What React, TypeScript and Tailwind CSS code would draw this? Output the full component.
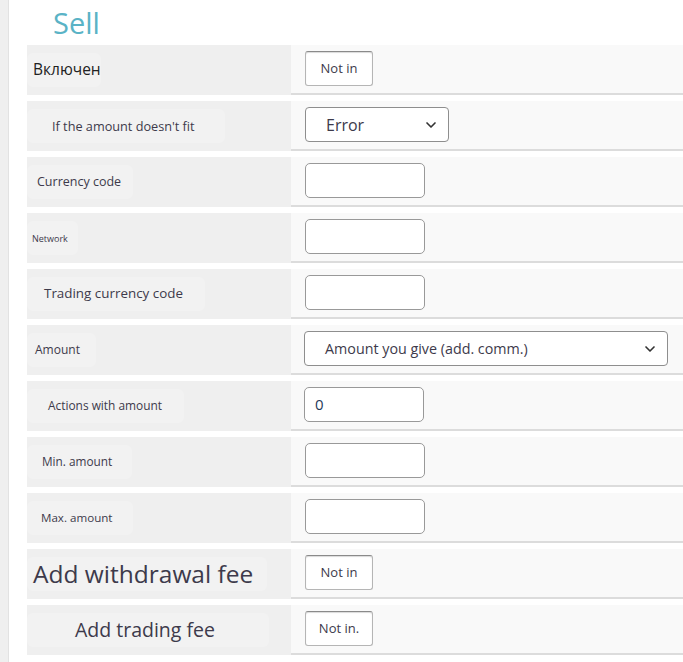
import { ChevronDown } from "lucide-react";

type Row = {
  label: string;
  labelClass: string;
  control: "toggle" | "select" | "input" | "wide";
  value?: string;
};

const rows: Row[] = [
  { label: "Включен", labelClass: "pl-[6px] text-[15.5px] font-medium text-[#222]", control: "toggle", value: "Not in" },
  { label: "If the amount doesn't fit", labelClass: "pl-[25px] pr-[30px] text-[12.7px]", control: "select", value: "Error" },
  { label: "Currency code", labelClass: "pl-[10px] pr-[12px] text-[12.5px]", control: "input" },
  { label: "Network", labelClass: "pl-[5px] pr-[10px] text-[9px]", control: "input" },
  { label: "Trading currency code", labelClass: "pl-[17px] pr-[22px] text-[13.4px]", control: "input" },
  { label: "Amount", labelClass: "pl-[8px] pr-[16px] text-[12px]", control: "wide", value: "Amount you give (add. comm.)" },
  { label: "Actions with amount", labelClass: "pl-[21px] pr-[22px] text-[11.9px]", control: "input", value: "0" },
  { label: "Min. amount", labelClass: "pl-[15px] pr-[20px] text-[11.8px]", control: "input" },
  { label: "Max. amount", labelClass: "pl-[14px] pr-[20px] text-[11.6px]", control: "input" },
  { label: "Add withdrawal fee", labelClass: "pl-[6px] pr-[14px] text-[24.5px]", control: "toggle", value: "Not in" },
  { label: "Add trading fee", labelClass: "pl-[48px] pr-[54px] text-[19.5px]", control: "toggle", value: "Not in." },
];

function Control({ row }: { row: Row }) {
  if (row.control === "toggle") {
    return (
      <button className="flex h-[35px] w-[68px] items-center justify-center rounded-[3px] border border-[#b5b5b5] border-t-[#8a8a8a] bg-white text-[13px] text-[#3d3a4b] shadow-[inset_0_1px_1px_rgba(0,0,0,0.15)]">
        {row.value}
      </button>
    );
  }
  if (row.control === "select") {
    return (
      <div className="flex h-[35px] w-[144px] items-center justify-between rounded-[4px] border border-[#8e8e8e] bg-white pl-[20px] pr-[9px] text-[16px] text-[#3d3a4b]">
        <span>{row.value}</span>
        <ChevronDown size={16} strokeWidth={2.5} className="text-[#333]" />
      </div>
    );
  }
  if (row.control === "wide") {
    return (
      <div className="-ml-px flex h-[35px] w-[364px] items-center justify-between rounded-[4px] border border-[#8e8e8e] bg-white pl-[20px] pr-[9px] text-[14.3px] text-[#3d3a4b]">
        <span>{row.value}</span>
        <ChevronDown size={16} strokeWidth={2.5} className="text-[#333]" />
      </div>
    );
  }
  return (
    <div
      className={
        "flex h-[35px] w-[120px] items-center rounded-[5px] border border-[#999] bg-white px-[10px] text-[15px] text-[#1f3a5a]" +
        (row.value ? " -ml-px" : "")
      }
    >
      {row.value}
    </div>
  );
}

export default function App() {
  return (
    <div
      className="flex min-h-[662px] w-[683px] bg-white text-[#3d3a4b]"
      style={{ fontFamily: '"Open Sans", "Noto Sans", sans-serif' }}
    >
      <div className="w-[9px] shrink-0 border-r border-[#e2e2e2] bg-[#efefef]" />
      <div className="flex-1 pl-[18px]">
        <div className="flex h-[45px] items-center pl-[26px]">
          <h1 className="text-[29px] leading-none text-[#5ab3c6]">Sell</h1>
        </div>
        <div className="flex flex-col gap-[6px]">
          {rows.map((row) => (
            <div key={row.label} className="flex h-[50px]">
              <div className="flex w-[264px] shrink-0 items-center bg-[#efefef]">
                <div
                  className={
                    "flex h-[34px] items-center rounded-[6px] bg-[#f2f2f2] leading-none " +
                    row.labelClass
                  }
                >
                  {row.label}
                </div>
              </div>
              <div className="flex flex-1 items-center border-b-2 border-[#dcdcdc] bg-[#f9f9f9] pb-[1px] pl-[14px]">
                <Control row={row} />
              </div>
            </div>
          ))}
        </div>
      </div>
    </div>
  );
}
